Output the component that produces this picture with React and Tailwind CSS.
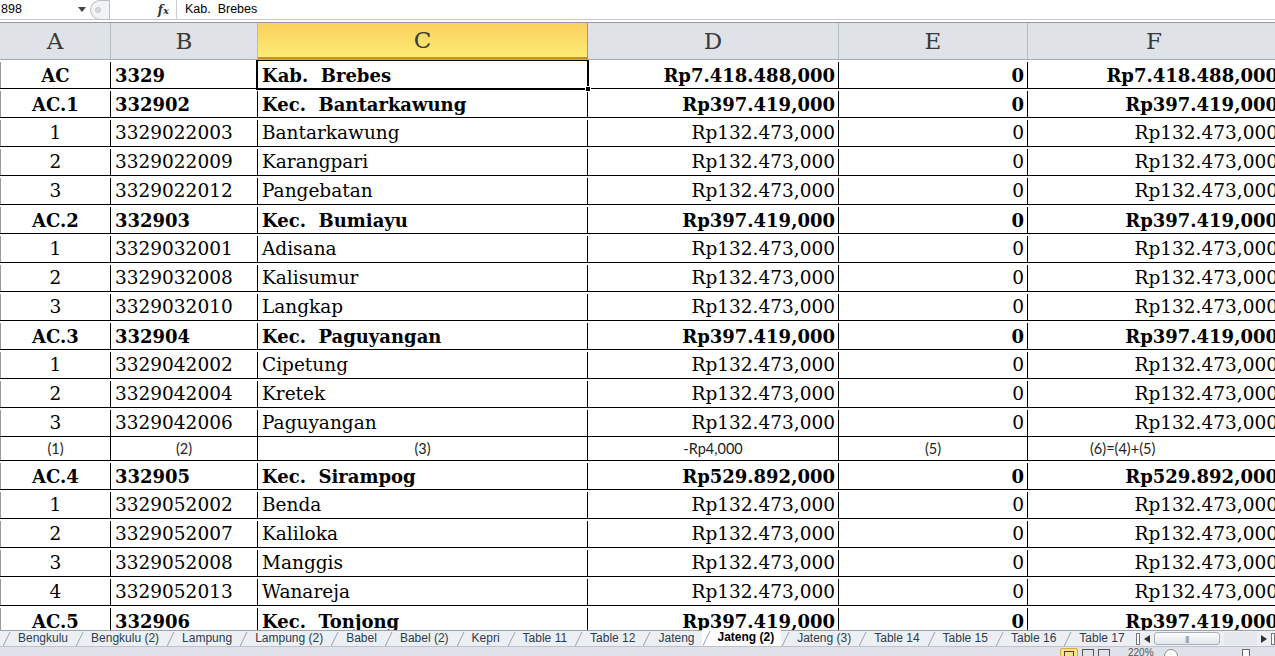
import React from 'react';

const serif = { fontFamily: '"DejaVu Serif", "Liberation Serif", serif' };
const ui = { fontFamily: '"Liberation Sans", Arial, sans-serif' };

const cols = ['w-[111px] border-l', 'w-[147px]', 'w-[330px]', 'w-[251px]', 'w-[189px]', 'w-[252px]'];

const rows = [
    { bold: true, a: 'AC', b: '3329', c: 'Kab.  Brebes', d: 'Rp7.418.488,000', f: 'Rp7.418.488,000' },
    { bold: true, a: 'AC.1', b: '332902', c: 'Kec.  Bantarkawung', d: 'Rp397.419,000', f: 'Rp397.419,000' },
    { a: '1', b: '3329022003', c: 'Bantarkawung' },
    { a: '2', b: '3329022009', c: 'Karangpari' },
    { a: '3', b: '3329022012', c: 'Pangebatan' },
    { bold: true, a: 'AC.2', b: '332903', c: 'Kec.  Bumiayu', d: 'Rp397.419,000', f: 'Rp397.419,000' },
    { a: '1', b: '3329032001', c: 'Adisana' },
    { a: '2', b: '3329032008', c: 'Kalisumur' },
    { a: '3', b: '3329032010', c: 'Langkap' },
    { bold: true, a: 'AC.3', b: '332904', c: 'Kec.  Paguyangan', d: 'Rp397.419,000', f: 'Rp397.419,000' },
    { a: '1', b: '3329042002', c: 'Cipetung' },
    { a: '2', b: '3329042004', c: 'Kretek' },
    { a: '3', b: '3329042006', c: 'Paguyangan' },
    { small: true },
    { bold: true, a: 'AC.4', b: '332905', c: 'Kec.  Sirampog', d: 'Rp529.892,000', f: 'Rp529.892,000' },
    { a: '1', b: '3329052002', c: 'Benda' },
    { a: '2', b: '3329052007', c: 'Kaliloka' },
    { a: '3', b: '3329052008', c: 'Manggis' },
    { a: '4', b: '3329052013', c: 'Wanareja' },
    { bold: true, a: 'AC.5', b: '332906', c: 'Kec.  Tonjong', d: 'Rp397.419,000', f: 'Rp397.419,000' },
];

const tabs = ['Bengkulu', 'Bengkulu (2)', 'Lampung', 'Lampung (2)', 'Babel', 'Babel (2)', 'Kepri', 'Table 11', 'Table 12', 'Jateng', 'Jateng (2)', 'Jateng (3)', 'Table 14', 'Table 15', 'Table 16', 'Table 17'];

const Slant = () => (
    <svg width="9" height="16" viewBox="0 0 9 16" className="shrink-0">
        <line x1="1" y1="15.5" x2="8" y2="1" stroke="#9aa3ad" strokeWidth="1" />
    </svg>
);

const DataRow = ({ r }) => {
    if (r.small) {
        return (
            <div className="flex h-[24px] shrink-0 border-b border-black text-[14.5px] text-[#222]" style={{ fontFamily: 'Lato, "Open Sans", sans-serif' }}>
                <div className={`${cols[0]} shrink-0 border-r border-black border-l-[#9a9a9a] flex items-center justify-center`}>(1)</div>
                <div className={`${cols[1]} shrink-0 border-r border-black flex items-center justify-center`}>(2)</div>
                <div className={`${cols[2]} shrink-0 border-r border-black flex items-center justify-center`}>(3)</div>
                <div className={`${cols[3]} shrink-0 border-r border-black flex items-center justify-center`}>-Rp4,000</div>
                <div className={`${cols[4]} shrink-0 border-r border-black flex items-center justify-center`}>(5)</div>
                <div className={`${cols[5]} shrink-0 flex items-center pl-[62px]`}>(6)=(4)+(5)</div>
            </div>
        );
    }
    const d = r.d || 'Rp132.473,000';
    const f = r.f || 'Rp132.473,000';
    const w = r.bold ? 'font-bold text-[18px]' : 'text-[18.5px]';
    return (
        <div className={`flex h-[29px] shrink-0 border-b border-black text-black pt-[2px] ${w}`} style={serif}>
            <div className={`${cols[0]} shrink-0 border-r border-black border-l-[#9a9a9a] flex items-center justify-center`}>{r.a}</div>
            <div className={`${cols[1]} shrink-0 border-r border-black flex items-center pl-[4px]`}>{r.b}</div>
            <div className={`${cols[2]} shrink-0 border-r border-black flex items-center pl-[4px] whitespace-pre`}>{r.c}</div>
            <div className={`${cols[3]} shrink-0 border-r border-black flex items-center justify-end pr-[3px]`}>{d}</div>
            <div className={`${cols[4]} shrink-0 border-r border-black flex items-center justify-end pr-[3px]`}>0</div>
            <div className={`${cols[5]} shrink-0 flex items-center justify-end pr-[2px]`}>{f}</div>
        </div>
    );
};

export default function App() {
    return (
        <div className="w-[1275px] h-[656px] overflow-hidden bg-white flex flex-col">
            {/* formula bar */}
            <div className="h-[20px] shrink-0 flex items-center border-b border-[#c3c8cf] text-[12.5px] text-black" style={ui}>
                <div className="w-[90px] shrink-0 flex items-center justify-between pl-[1px] pr-[4px]">
                    <span>898</span>
                    <svg width="8" height="5" viewBox="0 0 8 5"><path d="M0 0h8L4 5z" fill="#444" /></svg>
                </div>
                <div className="w-[20px] h-[20px] shrink-0 rounded-l-full border border-[#b8bec6] bg-[#f2f3f5] flex items-center justify-start pl-[4px]">
                    <span className="w-[6px] h-[6px] rounded-full bg-[#d6d9de] border border-[#c4c8ce]" />
                </div>
                <div className="w-[66px] shrink-0 flex items-center justify-end pr-[7px]">
                    <span className="italic font-bold text-[12px] text-[#333]" style={serif}>f<span className="text-[10px]">x</span></span>
                </div>
                <div className="w-px h-[20px] bg-[#c9ced5]" />
                <div className="pl-[8px] whitespace-pre">Kab.  Brebes</div>
            </div>
            <div className="h-[2px] shrink-0" />

            {/* column headers */}
            <div className="flex h-[38px] shrink-0 border-t border-[#9a9a9a] border-b border-b-[#a8acb2] bg-[#dfe3e8] text-[23px] text-[#3a3a3a]" style={serif}>
                <div className="w-[111px] shrink-0 border-r border-[#b6bcc4] flex items-center justify-center">A</div>
                <div className="w-[147px] shrink-0 border-r border-[#b6bcc4] flex items-center justify-center">B</div>
                <div className="w-[330px] shrink-0 border-r border-[#c98f2c] border-b-2 border-b-[#c98f2c] bg-gradient-to-b from-[#f9d05e] to-[#feeb75] flex items-center justify-center">C</div>
                <div className="w-[251px] shrink-0 border-r border-[#b6bcc4] flex items-center justify-center">D</div>
                <div className="w-[189px] shrink-0 border-r border-[#b6bcc4] flex items-center justify-center">E</div>
                <div className="w-[252px] shrink-0 flex items-center justify-center">F</div>
            </div>

            {/* grid */}
            <div className="relative flex-1 overflow-hidden flex flex-col">
                {rows.map((r, i) => <DataRow key={i} r={r} />)}
                <div className="absolute left-[256px] top-[-1px] w-[333px] h-[31px] border-2 border-black pointer-events-none" />
                <div className="absolute left-[585px] top-[26px] w-[6px] h-[6px] bg-black border border-white" />
            </div>

            {/* sheet tabs */}
            <div className="h-[16px] shrink-0 flex items-stretch bg-[#eceff3] border-t border-[#9aa3ad] text-[12px] text-[#2d3b4e]" style={ui}>
                <div className="w-[2px] shrink-0" />
                {tabs.map(t => {
                    const active = t === 'Jateng (2)';
                    return (
                        <div key={t} className={`flex items-stretch shrink-0 ${active ? 'bg-white -mt-px font-bold text-black' : ''}`}>
                            <Slant />
                            <span className="px-[7px] leading-[15px] whitespace-nowrap">{t}</span>
                        </div>
                    );
                })}
                <div className="ml-[4px] flex items-center gap-[4px] flex-1">
                    <span className="w-[4px] h-[12px] border border-[#777] bg-white" />
                    <svg width="6" height="8" viewBox="0 0 6 8"><path d="M6 0v8L0 4z" fill="#333" /></svg>
                    <div className="w-[66px] h-[13px] rounded-[3px] border border-[#a7afba] bg-gradient-to-b from-[#fbfcfd] to-[#e2e6eb] flex items-center justify-center text-[8px] text-[#777] tracking-[-1px]">|||</div>
                    <div className="flex-1 h-[13px] bg-[#e4e8ed]" />
                    <svg width="6" height="8" viewBox="0 0 6 8"><path d="M0 0v8l6-4z" fill="#333" /></svg>
                    <span className="w-[4px] h-[12px] border border-[#777] bg-white" />
                </div>
            </div>

            {/* status bar */}
            <div className="h-[10px] shrink-0 bg-[#dfe3e9] border-t border-[#bcc3cc] flex items-start pl-[1060px] gap-[4px] text-[10px] text-[#555]" style={ui}>
                <span className="w-[18px] h-[12px] mt-[1px] rounded-[2px] border border-[#e0a93a] bg-[#fbe08a] flex justify-center"><span className="w-[10px] h-[8px] mt-[2px] border border-[#444]" /></span>
                <span className="w-[12px] h-[9px] mt-[2px] border border-[#555]" />
                <span className="w-[12px] h-[9px] mt-[2px] border border-[#555]" />
                <span className="ml-[14px] leading-[12px]">220%</span>
                <span className="ml-[6px] w-[14px] h-[14px] mt-[2px] rounded-full border border-[#888] bg-white" />
                <span className="ml-[60px] w-[8px] h-[10px] mt-[2px] border border-[#666] bg-white" />
            </div>
        </div>
    );
}
